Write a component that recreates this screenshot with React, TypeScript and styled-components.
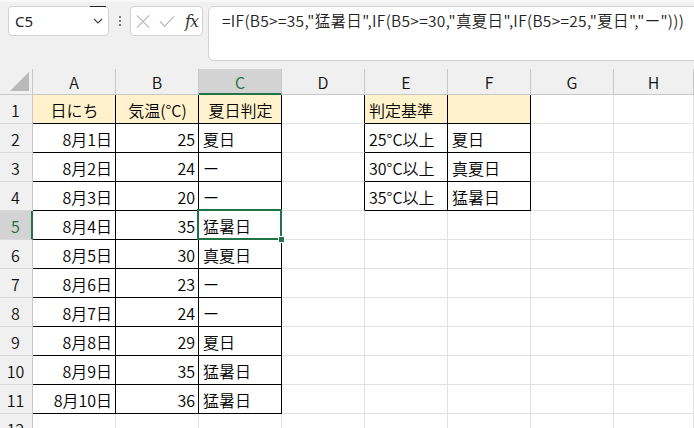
import React from "react";
import styled, { createGlobalStyle, css } from "styled-components";

const GlobalStyle = createGlobalStyle`
  html, body { margin: 0; padding: 0; background: #ffffff; }
  body {
    font-family: "Noto Sans CJK JP", "Noto Sans", sans-serif;
    font-weight: 350;
    color: #000;
    overflow: hidden;
  }
`;

const Page = styled.div`
  width: 694px;
  height: 428px;
  overflow: hidden;
  display: flex;
  flex-direction: column;
  background: #fff;
`;

const Toolbar = styled.div`
  height: 69px;
  flex: none;
  box-sizing: border-box;
  background: #f0f0f0;
  border-top: 2px solid #f8f8f8;
  padding: 4px 0 0 8px;
  display: flex;
  align-items: flex-start;
  overflow: hidden;
`;

const NameBox = styled.div`
  position: relative;
  width: 101px;
  height: 30px;
  box-sizing: border-box;
  background: #fff;
  border: 1px solid #d2d2d2;
  border-radius: 4px;
  display: flex;
  align-items: center;
  justify-content: space-between;
  padding: 0 5px 0 6px;
  font-family: "Noto Sans", "Liberation Sans", sans-serif;
  font-weight: 400;
  font-size: 15px;
  color: #222;
  &::after {
    content: "";
    position: absolute;
    top: -1px;
    right: 2px;
    width: 16px;
    height: 1px;
    background: #222;
  }
`;

const Dots = styled.div`
  width: 21px;
  height: 30px;
  display: flex;
  flex-direction: column;
  align-items: center;
  justify-content: center;
  gap: 2px;
`;

const Dot = styled.span`
  width: 2px;
  height: 2px;
  background: #7a7a7a;
`;

const FuncBox = styled.div`
  width: 73px;
  height: 30px;
  box-sizing: border-box;
  background: #fff;
  border: 1px solid #d2d2d2;
  border-radius: 4px;
  display: flex;
  align-items: center;
  padding: 0 4px 0 5px;
  gap: 9px;
  margin-right: 5px;
`;

const Fx = styled.span`
  font-family: "DejaVu Serif", "Liberation Serif", serif;
  font-style: italic;
  font-weight: 400;
  font-size: 16px;
  color: #333;
  letter-spacing: -1px;
  margin-left: 1px;
`;

const FormulaBox = styled.div`
  flex: 1;
  height: 55px;
  box-sizing: border-box;
  background: #fff;
  border: 1px solid #d2d2d2;
  border-radius: 6px;
  margin-right: -10px;
  padding: 2px 0 0 13px;
  font-size: 15.5px;
  letter-spacing: 0.32px;
  color: #222;
  white-space: nowrap;
`;

const Sheet = styled.div`
  flex: 1;
  display: grid;
  grid-template-columns: 33px repeat(7, 83px) 1fr;
  grid-template-rows: 26px;
  grid-auto-rows: 29px;
  overflow: hidden;
`;

const Corner = styled.div`
  background: #f0f0f0;
  box-sizing: border-box;
  border-right: 1px solid #c8c8c8;
  border-bottom: 1px solid #c8c8c8;
  display: flex;
  align-items: flex-end;
  justify-content: flex-end;
  padding: 0 3px 3px 0;
`;

const Triangle = styled.div`
  width: 19px;
  height: 19px;
  background: #b9b9b9;
  clip-path: polygon(100% 0, 100% 100%, 0 100%);
`;

const ColHeader = styled.div<{ $sel?: boolean }>`
  background: ${(p) => (p.$sel ? "#d3d3d3" : "#f0f0f0")};
  color: ${(p) => (p.$sel ? "#1e6b41" : "#111")};
  box-sizing: border-box;
  border-right: 1px solid #c8c8c8;
  border-bottom: ${(p) => (p.$sel ? "2px solid #217346" : "1px solid #c8c8c8")};
  display: flex;
  align-items: center;
  justify-content: center;
  font-size: 16px;
  padding-top: ${(p) => (p.$sel ? "1px" : "0")};
`;

const RowHeader = styled.div<{ $sel?: boolean }>`
  background: ${(p) => (p.$sel ? "#d3d3d3" : "#f0f0f0")};
  color: ${(p) => (p.$sel ? "#1e6b41" : "#111")};
  box-sizing: border-box;
  border-right: ${(p) => (p.$sel ? "2px solid #217346" : "1px solid #c8c8c8")};
  border-bottom: 1px solid #dadada;
  display: flex;
  align-items: center;
  justify-content: center;
  font-size: 16px;
  padding: 1px ${(p) => (p.$sel ? "0" : "1px")} 0 0;
`;

type Align = "left" | "right" | "center";

const Cell = styled.div<{
  $align?: Align;
  $fill?: boolean;
  $r?: boolean;
  $b?: boolean;
  $sel?: boolean;
}>`
  position: relative;
  box-sizing: border-box;
  background: ${(p) => (p.$fill ? "#fff2cc" : "#fff")};
  border-right: 1px solid ${(p) => (p.$r ? "#000" : "#e1e1e1")};
  border-bottom: 1px solid ${(p) => (p.$b ? "#000" : "#e1e1e1")};
  display: flex;
  align-items: center;
  justify-content: ${(p) =>
    p.$align === "right" ? "flex-end" : p.$align === "center" ? "center" : "flex-start"};
  padding: 2px 3px 0 4px;
  font-size: 16px;
  white-space: nowrap;
  ${(p) =>
    p.$sel &&
    css`
      &::after {
        content: "";
        position: absolute;
        top: -2px;
        left: -2px;
        right: -1px;
        bottom: -1px;
        border: 2px solid #217346;
        z-index: 2;
        pointer-events: none;
      }
      &::before {
        content: "";
        position: absolute;
        right: -4px;
        bottom: -4px;
        width: 5px;
        height: 5px;
        background: #217346;
        border: 1px solid #fff;
        z-index: 3;
      }
    `}
`;

const cols = ["A", "B", "C", "D", "E", "F", "G", "H"];

const data: [string, number, string][] = [
  ["8月1日", 25, "夏日"],
  ["8月2日", 24, "ー"],
  ["8月3日", 20, "ー"],
  ["8月4日", 35, "猛暑日"],
  ["8月5日", 30, "真夏日"],
  ["8月6日", 23, "ー"],
  ["8月7日", 24, "ー"],
  ["8月8日", 29, "夏日"],
  ["8月9日", 35, "猛暑日"],
  ["8月10日", 36, "猛暑日"],
];

const criteria: [string, string][] = [
  ["判定基準", ""],
  ["25°C以上", "夏日"],
  ["30°C以上", "真夏日"],
  ["35°C以上", "猛暑日"],
];

type CellSpec = { text?: string; align?: Align; fill?: boolean; r?: boolean; b?: boolean; sel?: boolean };

function buildRow(row: number): CellSpec[] {
  const cells: CellSpec[] = [];
  if (row === 1) {
    cells.push({ text: "日にち", align: "center", fill: true, r: true, b: true });
    cells.push({ text: "気温(°C)", align: "center", fill: true, r: true, b: true });
    cells.push({ text: "夏日判定", align: "center", fill: true, r: true, b: true });
  } else if (row >= 2 && row <= 11) {
    const d = data[row - 2];
    cells.push({ text: d[0], align: "right", r: true, b: true });
    cells.push({ text: String(d[1]), align: "right", r: true, b: true });
    cells.push({ text: d[2], align: "left", r: true, b: true, sel: row === 5 });
  } else {
    cells.push({}, {}, {});
  }
  cells.push({ r: row >= 1 && row <= 4 });
  if (row >= 1 && row <= 4) {
    const c = criteria[row - 1];
    cells.push({ text: c[0], align: "left", fill: row === 1, r: true, b: true });
    cells.push({ text: c[1], align: "left", fill: row === 1, r: true, b: true });
  } else {
    cells.push({}, {});
  }
  cells.push({}, {});
  return cells;
}

const CrossIcon = () => (
  <svg width="15" height="15" viewBox="0 0 15 15">
    <path d="M1 1 L14 14 M14 1 L1 14" stroke="#b8b8b8" strokeWidth="1.3" fill="none" />
  </svg>
);

const CheckIcon = () => (
  <svg width="17" height="13" viewBox="0 0 17 13">
    <path d="M1 6.5 L6 11.5 L16 1" stroke="#b8b8b8" strokeWidth="1.3" fill="none" />
  </svg>
);

const Chevron = () => (
  <svg width="10" height="6" viewBox="0 0 10 6">
    <path d="M1 1 L5 5 L9 1" stroke="#444" strokeWidth="1.2" fill="none" />
  </svg>
);

export default function App() {
  const rows = Array.from({ length: 12 }, (_, i) => i + 1);
  return (
    <>
      <GlobalStyle />
      <Page>
        <Toolbar>
          <NameBox>
            <span>C5</span>
            <Chevron />
          </NameBox>
          <Dots>
            <Dot />
            <Dot />
            <Dot />
          </Dots>
          <FuncBox>
            <CrossIcon />
            <CheckIcon />
            <Fx>fx</Fx>
          </FuncBox>
          <FormulaBox>
            =IF(B5&gt;=35,"猛暑日",IF(B5&gt;=30,"真夏日",IF(B5&gt;=25,"夏日","ー")))
          </FormulaBox>
        </Toolbar>
        <Sheet>
          <Corner>
            <Triangle />
          </Corner>
          {cols.map((c) => (
            <ColHeader key={c} $sel={c === "C"}>
              {c}
            </ColHeader>
          ))}
          {rows.map((r) => (
            <React.Fragment key={r}>
              <RowHeader $sel={r === 5}>{r}</RowHeader>
              {buildRow(r).map((cell, i) => (
                <Cell
                  key={i}
                  $align={cell.align}
                  $fill={cell.fill}
                  $r={cell.r}
                  $b={cell.b}
                  $sel={cell.sel}
                >
                  {cell.text}
                </Cell>
              ))}
            </React.Fragment>
          ))}
        </Sheet>
      </Page>
    </>
  );
}
